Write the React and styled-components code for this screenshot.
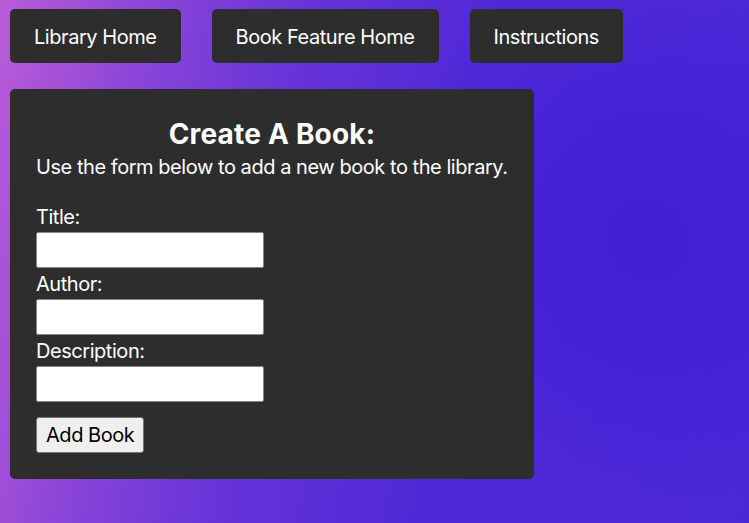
import styled, { createGlobalStyle } from "styled-components";

const GlobalStyle = createGlobalStyle`
  html, body {
    margin: 0;
    padding: 0;
    height: 100%;
  }
  body {
    font-family: Inter, "Noto Sans", "Liberation Sans", sans-serif;
    letter-spacing: -0.45px;
    background: radial-gradient(circle at 86% 46%, #3f1fd4 0%, rgba(63, 31, 212, 0) 40%),
      linear-gradient(100deg, #b95cd8 0%, #8a45d8 18%, #6532d8 38%, #4f29d7 60%, #4a27d6 100%);
    min-height: 100vh;
  }
`;

const Page = styled.div`
  padding: 9px 10px;
  color: #fff;
`;

const Nav = styled.nav`
  display: flex;
  gap: 31px;
`;

const NavButton = styled.button`
  height: 54px;
  padding: 1px 24px 0;
  background-color: #2d2d2d;
  color: #fff;
  border: none;
  border-radius: 5px;
  font-family: inherit;
  letter-spacing: inherit;
  font-size: 20px;
  font-weight: 400;
  cursor: pointer;
`;

const Card = styled.section`
  margin-top: 26px;
  width: 524px;
  box-sizing: border-box;
  padding: 28px 26px 26px;
  background-color: #2d2d2d;
  border-radius: 5px;
`;

const Heading = styled.h1`
  margin: 0;
  font-size: 28px;
  line-height: 34px;
  font-weight: 700;
  letter-spacing: 0.2px;
  text-align: center;
`;

const Intro = styled.p`
  margin: 4px 0 26px;
  font-size: 20px;
  line-height: 24px;
  white-space: nowrap;
`;

const Form = styled.form`
  display: flex;
  flex-direction: column;
  align-items: flex-start;
`;

const Label = styled.label`
  display: block;
  margin: ${(p) => (p.$first ? "0" : "4px")} 0 3px;
  font-size: 20px;
  line-height: 24px;
`;

const Input = styled.input`
  width: 228px;
  height: 36px;
  box-sizing: border-box;
  border: 1px solid #858585;
  border-radius: 2px;
  background: #fff;
  font-size: 18px;
  padding: 0 6px;
`;

const SubmitButton = styled.button`
  margin-top: 15px;
  height: 36px;
  padding: 0 9px;
  background-color: #efefef;
  color: #000;
  border: 1px solid #767676;
  border-radius: 3px;
  font-family: inherit;
  letter-spacing: inherit;
  font-size: 20px;
  cursor: pointer;
`;

const fields = [
  { id: "title", label: "Title:" },
  { id: "author", label: "Author:" },
  { id: "description", label: "Description:" },
];

export default function App() {
  return (
    <>
      <GlobalStyle />
      <Page>
        <Nav>
          <NavButton>Library Home</NavButton>
          <NavButton>Book Feature Home</NavButton>
          <NavButton>Instructions</NavButton>
        </Nav>
        <Card>
          <Heading>Create A Book:</Heading>
          <Intro>Use the form below to add a new book to the library.</Intro>
          <Form onSubmit={(e) => e.preventDefault()}>
            {fields.map((f, i) => (
              <div key={f.id}>
                <Label htmlFor={f.id} $first={i === 0}>
                  {f.label}
                </Label>
                <Input id={f.id} type="text" />
              </div>
            ))}
            <SubmitButton type="submit">Add Book</SubmitButton>
          </Form>
        </Card>
      </Page>
    </>
  );
}
